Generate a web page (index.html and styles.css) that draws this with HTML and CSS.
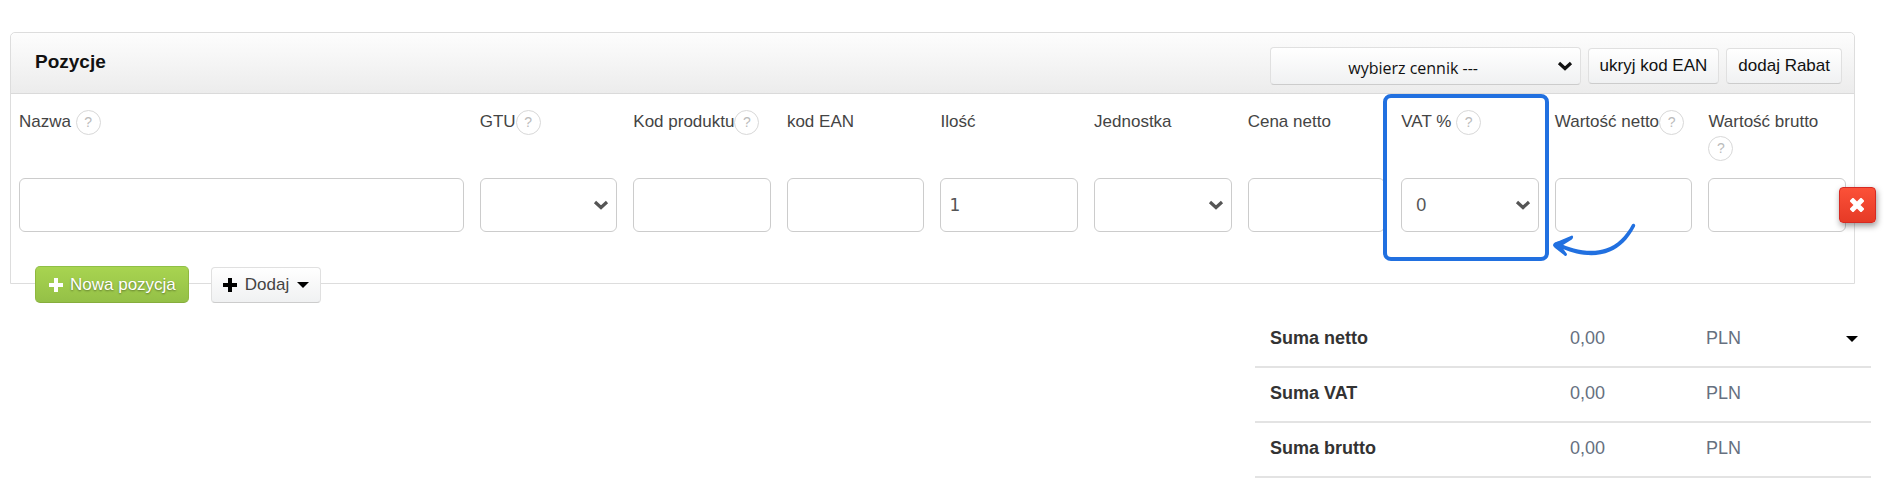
FILE: index.html
```
<!DOCTYPE html>
<html lang="pl">
<head>
  <meta charset="UTF-8">
  <title>Pozycje</title>
  <link rel="stylesheet" href="styles.css">
</head>
<body>
  <form class="invoice">
    <section class="panel">
      <header class="panel-header">
        <h2>Pozycje</h2>
        <div class="panel-tools">
          <select class="btn price-list" aria-label="Cennik">
            <option>wybierz cennik ---</option>
          </select>
          <button type="button" class="btn">ukryj kod EAN</button>
          <button type="button" class="btn">dodaj Rabat</button>
        </div>
      </header>

      <div class="positions">
        <div class="field field-name">
          <div class="field-label"><label for="name">Nazwa</label> <span class="help">?</span></div>
          <input type="text" id="name">
        </div>
        <div class="field">
          <div class="field-label"><label for="gtu">GTU</label><span class="help">?</span></div>
          <select id="gtu"><option></option></select>
        </div>
        <div class="field">
          <div class="field-label"><label for="code">Kod produktu</label><span class="help">?</span></div>
          <input type="text" id="code">
        </div>
        <div class="field">
          <div class="field-label"><label for="ean">kod EAN</label></div>
          <input type="text" id="ean">
        </div>
        <div class="field">
          <div class="field-label"><label for="quantity">Ilość</label></div>
          <input type="text" id="quantity" value="1">
        </div>
        <div class="field">
          <div class="field-label"><label for="unit">Jednostka</label></div>
          <select id="unit"><option></option></select>
        </div>
        <div class="field">
          <div class="field-label"><label for="price">Cena netto</label></div>
          <input type="text" id="price">
        </div>
        <div class="field field-vat">
          <div class="field-label"><label for="vat">VAT %</label> <span class="help">?</span></div>
          <select id="vat"><option>0</option></select>
          <div class="highlight"></div>
          <svg class="arrow" viewBox="0 0 84 36" aria-hidden="true">
            <path d="M79 1.500C80 0 83 1 82 3.500C75 17 66 25 57 28.500C42 35 24 32 10 26L5 23L6 20C18 26 38 31 53 25.500C64 22 73 13 79 1.500Z" />
            <path d="M0 22C1 19 3 19 6 18L19 12.500C21 13 20 16 18 17L10 22C8 24 12 28 14 31C14 33 12 34 11 32L2 25C1 24 0 23 0 22Z" />
          </svg>
        </div>
        <div class="field">
          <div class="field-label"><label for="total-net">Wartość netto</label><span class="help">?</span></div>
          <input type="text" id="total-net">
        </div>
        <div class="field field-gross">
          <div class="field-label"><label for="total-gross">Wartość brutto</label> <span class="help">?</span></div>
          <input type="text" id="total-gross">
          <button type="button" class="remove" aria-label="Usuń">
            <svg viewBox="0 0 14 14" aria-hidden="true"><path d="M3 3L11 11M11 3L3 11" /></svg>
          </button>
        </div>
      </div>
    </section>

    <!-- Buttons sit on the bottom border of the panel -->
    <div class="actions">
      <button type="button" class="btn btn-new">
        <svg class="plus" viewBox="0 0 14 14" aria-hidden="true"><path d="M7 0V14M0 7H14" /></svg>
        Nowa pozycja
      </button>
      <button type="button" class="btn btn-add">
        <svg class="plus" viewBox="0 0 14 14" aria-hidden="true"><path d="M7 0V14M0 7H14" /></svg>
        Dodaj
        <span class="caret"></span>
      </button>
    </div>

    <table class="totals">
      <tr>
        <th scope="row">Suma netto</th>
        <td class="amount">0,00</td>
        <td class="currency">PLN</td>
        <td class="more"><button type="button" class="toggle" aria-label="Rozwiń"><span class="caret"></span></button></td>
      </tr>
      <tr>
        <th scope="row">Suma VAT</th>
        <td class="amount">0,00</td>
        <td class="currency">PLN</td>
        <td></td>
      </tr>
      <tr>
        <th scope="row">Suma brutto</th>
        <td class="amount">0,00</td>
        <td class="currency">PLN</td>
        <td></td>
      </tr>
    </table>
  </form>
</body>
</html>
```
FILE: styles.css
```
* {
  box-sizing: border-box;
}
body {
  margin: 0;
  background: white;
  color: #444;
  font-family: "Liberation Sans", Arial, sans-serif;
  font-size: 17px;
  line-height: 24px;
}
button, input, select {
  font: inherit;
}
.invoice {
  padding: 32px 30px 0 10px;
}
.panel {
  margin-right: 16px;
  border: 1px solid #ddd;
  border-radius: 5px 5px 0 0;
}
/* Header bar */
.panel-header {
  display: flex;
  justify-content: space-between;
  align-items: center;
  height: 61px;
  padding: 5px 12px 0 24px;
  border-bottom: 1px solid #dadada;
  border-radius: 5px 5px 0 0;
  background: linear-gradient(#fdfdfd, #ececec);
}
.panel-header h2 {
  margin: 0 0 8px;
  color: #111;
  font-size: 19px;
}
.panel-tools {
  display: flex;
  align-items: center;
  gap: 7px;
}
.btn {
  height: 36px;
  padding: 0 11px;
  border: 1px solid #e0e0e0;
  border-bottom-color: #ccc;
  border-radius: 4px;
  background: linear-gradient(#fff, #f0f1f2);
  color: #111;
  cursor: pointer;
}
.price-list {
  appearance: none;
  width: 311px;
  height: 38px;
  padding: 4px 32px 0 8px;
  background: url("data:image/svg+xml,%3Csvg xmlns='http://www.w3.org/2000/svg' viewBox='0 0 16 10'%3E%3Cpath d='M2 2l6 5.500L14 2' fill='none' stroke='%23111' stroke-width='3.200'/%3E%3C/svg%3E") no-repeat right 7px center / 16px 10px, linear-gradient(#fff, #f0f1f2);
  font-family: "Open Sans", sans-serif;
  font-size: 16px;
  text-align: center;
  text-align-last: center;
}
/* Invoice line */
.positions {
  display: grid;
  grid-template-columns: repeat(12, minmax(0, 1fr));
  gap: 16px;
  padding: 0 8px 51px;
}
.field {
  position: relative;
  padding-top: 15px;
}
.field-name {
  grid-column: span 3;
}
.field-label {
  height: 69px;
  line-height: 26px;
}
.field input, .field select {
  display: block;
  width: 100%;
  height: 54px;
  padding: 0 8px;
  border: 1px solid #ccc;
  border-radius: 6px;
  background-color: white;
  color: #555;
  font-family: "DejaVu Sans", sans-serif;
  font-size: 17px;
}
.field select {
  appearance: none;
  padding: 0 14px;
  background: white url("data:image/svg+xml,%3Csvg xmlns='http://www.w3.org/2000/svg' viewBox='0 0 16 10'%3E%3Cpath d='M2 2l6 5.500L14 2' fill='none' stroke='%23555' stroke-width='3.200'/%3E%3C/svg%3E") no-repeat right 7px center / 16px 10px;
  font-family: "Liberation Sans", Arial, sans-serif;
  font-size: 18px;
}
.help {
  display: inline-block;
  width: 25px;
  height: 25px;
  border: 1px solid #d8d8d8;
  border-radius: 50%;
  color: #bbb;
  font-size: 14px;
  line-height: 23px;
  text-align: center;
  vertical-align: middle;
}
/* Frame around the VAT column */
.highlight {
  position: absolute;
  top: 0;
  left: -18px;
  right: -10px;
  height: 167px;
  border: 4px solid #2170e0;
  border-radius: 8px;
  pointer-events: none;
}
.arrow {
  position: absolute;
  z-index: 1;
  top: 129px;
  left: 100%;
  width: 84px;
  height: 36px;
  margin-left: 14px;
  fill: #2170e0;
}
.remove {
  position: absolute;
  top: 93px;
  right: -30px;
  display: flex;
  justify-content: center;
  align-items: center;
  width: 37px;
  height: 36px;
  padding: 0;
  border: 1px solid #d62a22;
  border-radius: 4px;
  background: linear-gradient(#fb5138, #e63a26);
  box-shadow: 1px 3px 6px rgba(0, 0, 0, 0.4);
  cursor: pointer;
}
.remove svg {
  width: 14px;
  height: 14px;
  stroke: white;
  stroke-width: 5;
  stroke-linecap: square;
}
/* Buttons under the invoice line */
.actions {
  position: relative;
  display: flex;
  align-items: flex-end;
  gap: 22px;
  margin-top: -18px;
  padding-left: 25px;
}
.actions .btn {
  display: flex;
  align-items: center;
  gap: 8px;
}
.plus {
  width: 14px;
  height: 14px;
  stroke: currentColor;
  stroke-width: 4;
}
.actions .btn-new {
  gap: 7px;
  height: 37px;
  padding: 0 12px 0 13px;
  border-color: #8fc046 #8fb83f #86ad3c;
  border-radius: 5px;
  background: linear-gradient(#a8d450, #94c047);
  color: white;
  text-shadow: 0 1px 2px rgba(0, 0, 0, 0.4);
}
.actions .btn-add {
  color: #444;
}
.btn-add .plus {
  color: black;
}
.caret {
  display: inline-block;
  border: 6px solid transparent;
  border-top-color: black;
  border-bottom: 0;
}
/* Totals */
.totals {
  width: 616px;
  margin: 9px 0 0 auto;
  border-collapse: collapse;
  font-size: 18px;
}
.totals th, .totals td {
  height: 55px;
  padding: 0 0 3px;
  border-bottom: 2px solid #e3e3e3;
  text-align: left;
}
.totals th {
  padding-left: 15px;
  color: #333;
}
.totals td {
  color: #667080;
}
.totals .amount {
  width: 136px;
}
.totals .currency {
  width: 136px;
}
.totals .more {
  width: 29px;
}
.toggle {
  display: block;
  padding: 0 4px;
  border: 0;
  background: none;
  line-height: 6px;
  cursor: pointer;
}
```
